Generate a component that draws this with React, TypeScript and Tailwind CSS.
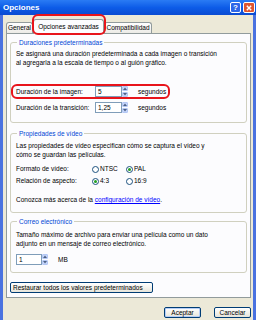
import React from 'react'

// ventana "Opciones" estilo Windows XP (Luna)
const font = "font-['Liberation_Sans',Arial,sans-serif]"

function Spin() {
  return (
    <div className="flex flex-col w-[6px] h-[11px] gap-px">
      <div className="flex-1 bg-[#C6D6FA] border border-[#B3C7F5] rounded-[1px] flex items-center justify-center">
        <svg width="4" height="3" viewBox="0 0 4 3"><path d="M0 3 L2 0.5 L4 3 Z" fill="#4D6185" /></svg>
      </div>
      <div className="flex-1 bg-[#C6D6FA] border border-[#B3C7F5] rounded-[1px] flex items-center justify-center">
        <svg width="4" height="3" viewBox="0 0 4 3"><path d="M0 0 L2 2.5 L4 0 Z" fill="#4D6185" /></svg>
      </div>
    </div>
  )
}

function NumBox({ value, w }: { value: string; w: string }) {
  return (
    <div className="flex items-center">
      <div className={`${w} h-[11px] border border-[#7F9DB9] bg-white pl-[2px] leading-[9px]`}>{value}</div>
      <Spin />
    </div>
  )
}

function Radio({ label, checked }: { label: string; checked?: boolean }) {
  return (
    <div className="flex items-center gap-[1px] w-[34px]">
      <div className="w-[7px] h-[7px] rounded-full border border-[#1C5180] bg-white flex items-center justify-center">
        {checked && <div className="w-[3px] h-[3px] rounded-full bg-[#21A121]" />}
      </div>
      <span>{label}</span>
    </div>
  )
}

function Group({ title, className, children }: { title: string; className?: string; children: React.ReactNode }) {
  return (
    <fieldset className={`border border-[#D0D0BF] rounded-[3px] px-[5px] ${className ?? ''}`}>
      <legend className="ml-[1px] px-[2px] leading-[9px] text-[#0046D5]">{title}</legend>
      {children}
    </fieldset>
  )
}

function XpButton({ label, def, className }: { label: string; def?: boolean; className?: string }) {
  return (
    <div
      className={`h-[11px] border border-[#003C74] rounded-[2px] bg-linear-to-b from-white to-[#E6E4DA] flex items-center leading-[9px] ${def ? 'shadow-[inset_0_0_0_1px_#B5CDF6]' : ''} ${className ?? ''}`}
    >
      {label}
    </div>
  )
}

export default function App() {
  return (
    <div className={`relative w-[256px] h-[320px] overflow-hidden bg-[#ECE9D8] text-[6.5px] text-black ${font}`}>
      {/* barra de título */}
      <div className="h-[15px] bg-linear-to-b from-[#2A7BF4] via-[#0D5CE8] to-[#0A4BD2] flex items-center justify-between pl-[3px] pr-[1px]">
        <span className="text-white font-bold text-[8px]">Opciones</span>
        <div className="flex items-center gap-[2px]">
          <div className="w-[11px] h-[11px] rounded-[2px] border border-white bg-[#2E67E8] flex items-center justify-center text-white font-bold text-[8px] leading-none">?</div>
          <div className="w-[12px] h-[11px] rounded-[2px] border border-white bg-[#DE5530] flex items-center justify-center">
            <svg width="6" height="6" viewBox="0 0 6 6"><path d="M0.8 0.8 L5.2 5.2 M5.2 0.8 L0.8 5.2" stroke="white" strokeWidth="1.4" /></svg>
          </div>
        </div>
      </div>

      {/* cuerpo con bordes de ventana */}
      <div className="h-[305px] border-x-[3px] border-[#4A72E0] flex flex-col">
        {/* pestañas */}
        <div className="flex items-end h-[18px] pl-[3px] relative z-10">
          <div className="w-[27px] h-[11px] border border-[#919B9C] border-b-0 rounded-t-[3px] bg-linear-to-b from-white to-[#ECEBE6] flex items-center justify-center">General</div>
          <div className="w-[71px] h-[15px] -mb-px border border-[#919B9C] border-b-0 rounded-t-[3px] bg-[#FCFCFE] flex items-center justify-center">Opciones avanzadas</div>
          <div className="w-[48px] h-[11px] border border-[#919B9C] border-b-0 rounded-t-[3px] bg-linear-to-b from-white to-[#ECEBE6] flex items-center justify-center">Compatibilidad</div>
        </div>

        {/* panel */}
        <div className="ml-[3px] mr-[2px] h-[265px] border border-[#919B9C] bg-[#FCFCFE] px-[3px] pt-[4px] flex flex-col">
          <Group title="Duraciones predeterminadas" className="pb-[9px]">
            <div className="pt-[2px] leading-[9px]">
              <div>Se asignará una duración predeterminada a cada imagen o transición</div>
              <div>al agregarla a la escala de tiempo o al guión gráfico.</div>
            </div>
            <div className="mt-[19px] flex items-center">
              <span className="w-[79px]">Duración de la imagen:</span>
              <NumBox value="5" w="w-[27px]" />
              <span className="ml-[10px]">segundos</span>
            </div>
            <div className="mt-[5px] flex items-center">
              <span className="w-[79px]">Duración de la transición:</span>
              <NumBox value="1,25" w="w-[27px]" />
              <span className="ml-[10px]">segundos</span>
            </div>
          </Group>

          <Group title="Propiedades de vídeo" className="mt-[6px] pb-[8px]">
            <div className="pt-[3px] leading-[9px]">
              <div>Las propiedades de vídeo especifican cómo se captura el vídeo y</div>
              <div>cómo se guardan las películas.</div>
            </div>
            <div className="mt-[5px] h-[10px] flex items-center">
              <span className="w-[76px]">Formato de vídeo:</span>
              <Radio label="NTSC" />
              <Radio label="PAL" checked />
            </div>
            <div className="mt-[2px] h-[10px] flex items-center">
              <span className="w-[76px]">Relación de aspecto:</span>
              <Radio label="4:3" checked />
              <Radio label="16:9" />
            </div>
            <div className="mt-[9px] leading-[9px]">
              Conozca más acerca de la <span className="text-[#0000FF] underline">configuración de vídeo</span>.
            </div>
          </Group>

          <Group title="Correo electrónico" className="mt-[4px] pb-[7px]">
            <div className="pt-[4px] leading-[9px]">
              <div>Tamaño máximo de archivo para enviar una película como un dato</div>
              <div>adjunto en un mensaje de correo electrónico.</div>
            </div>
            <div className="mt-[6px] flex items-center">
              <NumBox value="1" w="w-[26px]" />
              <span className="ml-[10px]">MB</span>
            </div>
          </Group>

          <XpButton label="Restaurar todos los valores predeterminados" className="mt-[9px] w-[143px] pl-[2px]" />
        </div>

        {/* botones inferiores */}
        <div className="mt-[9px] flex justify-end gap-[13px] pr-[2px]">
          <XpButton label="Aceptar" def className="w-[37px] justify-center" />
          <XpButton label="Cancelar" className="w-[37px] justify-center" />
        </div>
      </div>

      {/* marcas rojas sobre la captura */}
      <div className="absolute left-[32px] top-[14px] w-[74px] h-[21px] border-[2px] border-[#E8141B] rounded-[6px] z-20" />
      <div className="absolute left-[11px] top-[84px] w-[159px] h-[15px] border-[2px] border-[#E8141B] rounded-[6px] z-20" />
    </div>
  )
}
